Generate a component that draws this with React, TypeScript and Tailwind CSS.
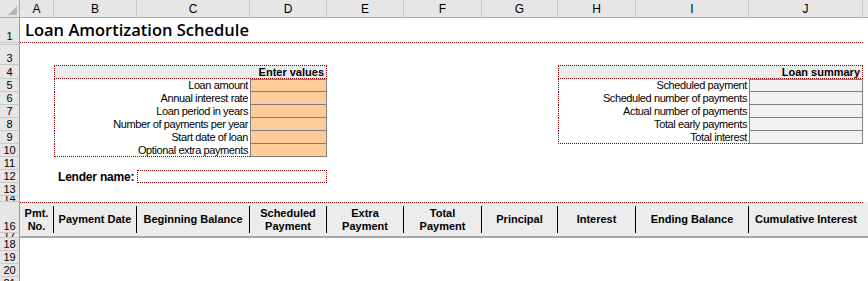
import React from 'react';

const font = { fontFamily: '"Liberation Sans", Arial, sans-serif' };

const colLetters = ['A', 'B', 'C', 'D', 'E', 'F', 'G', 'H', 'I', 'J'];

// grid row index -> label shown in the row header
const rowLabels: { row: number; label: string; clip?: boolean }[] = [
  { row: 2, label: '1' },
  { row: 3, label: '', clip: true },
  { row: 4, label: '3' },
  { row: 5, label: '4' },
  { row: 6, label: '5' },
  { row: 7, label: '6' },
  { row: 8, label: '7' },
  { row: 9, label: '8' },
  { row: 10, label: '9' },
  { row: 11, label: '10' },
  { row: 12, label: '11' },
  { row: 13, label: '12' },
  { row: 14, label: '13' },
  { row: 15, label: '14', clip: true },
  { row: 16, label: '16' },
  { row: 17, label: '17', clip: true },
  { row: 18, label: '18' },
  { row: 19, label: '19' },
  { row: 20, label: '20' },
  { row: 21, label: '21' },
];

const rowStart: Record<number, string> = {
  2: 'row-start-2', 3: 'row-start-3', 4: 'row-start-4', 5: 'row-start-5', 6: 'row-start-6',
  7: 'row-start-7', 8: 'row-start-8', 9: 'row-start-9', 10: 'row-start-10', 11: 'row-start-11',
  12: 'row-start-12', 13: 'row-start-13', 14: 'row-start-14', 15: 'row-start-15', 16: 'row-start-16',
  17: 'row-start-17', 18: 'row-start-18', 19: 'row-start-19', 20: 'row-start-20', 21: 'row-start-21',
};

const colStart: Record<number, string> = {
  2: 'col-start-2', 3: 'col-start-3', 4: 'col-start-4', 5: 'col-start-5', 6: 'col-start-6',
  7: 'col-start-7', 8: 'col-start-8', 9: 'col-start-9', 10: 'col-start-10', 11: 'col-start-11',
};

const inputs = [
  'Loan amount',
  'Annual interest rate',
  'Loan period in years',
  'Number of payments per year',
  'Start date of loan',
  'Optional extra payments',
];

const summary = [
  'Scheduled payment',
  'Scheduled number of payments',
  'Actual number of payments',
  'Total early payments',
  'Total interest',
];

const headers: string[][] = [
  ['Pmt.', 'No.'],
  ['Payment Date'],
  ['Beginning Balance'],
  ['Scheduled', 'Payment'],
  ['Extra', 'Payment'],
  ['Total', 'Payment'],
  ['Principal'],
  ['Interest'],
  ['Ending Balance'],
  ['Cumulative Interest'],
];

export default function App() {
  return (
    <div className="h-[281px] w-[868px] overflow-hidden bg-white text-black" style={font}>
      <div className="grid grid-cols-[20px_34px_83px_113px_77px_77px_78px_76px_78px_113px_114px_1fr] grid-rows-[18px_25px_2px_20px_14px_13px_13px_13px_13px_13px_13px_13px_13px_13px_6px_31px_5px_13px_13px_13px_13px]">
        {/* corner */}
        <div className="col-start-1 row-start-1 bg-[#e6e6e6] border-r border-b border-[#ababab] flex items-end justify-end p-[2px]">
          <svg width="9" height="9" viewBox="0 0 9 9">
            <polygon points="9,0 9,9 0,9" fill="#b7b7b7" />
          </svg>
        </div>

        {/* column headers */}
        {colLetters.map((c, i) => (
          <div
            key={c}
            className={`${colStart[i + 2]} row-start-1 bg-[#e6e6e6] border-r border-r-[#c6c6c6] border-b border-b-[#ababab] flex items-center justify-center text-[12px] leading-none`}
          >
            {c}
          </div>
        ))}
        <div className="col-start-12 row-start-1 bg-[#e6e6e6] border-b border-[#ababab]" />

        {/* row headers */}
        {rowLabels.map((r) => (
          <div
            key={r.row}
            className={`col-start-1 ${rowStart[r.row]} bg-[#e6e6e6] border-r border-r-[#9b9b9b] border-b border-b-[#c9c9c9] flex justify-center overflow-hidden text-[11px] ${r.clip ? 'items-start leading-[4px]' : 'items-end leading-[12px]'}`}
          >
            {r.label}
          </div>
        ))}

        {/* title row */}
        <div className="col-start-2 col-span-10 row-start-2 border-b border-dotted border-[#800000] flex items-center pl-[5px]">
          <span className="text-[16.5px] font-semibold leading-none" style={{ fontFamily: '"Open Sans", sans-serif' }}>
            Loan Amortization Schedule
          </span>
        </div>

        {/* Enter values box */}
        <div className="col-start-3 col-span-3 row-start-5 bg-[#ececec] border border-dotted border-[#800000] flex items-center justify-end pr-[2px] text-[11px] font-bold">
          Enter values
        </div>
        {inputs.map((label, i) => (
          <React.Fragment key={label}>
            <div
              className={`col-start-3 col-span-2 ${rowStart[6 + i]} border-l border-dotted border-[#800000] ${i === inputs.length - 1 ? 'border-b' : ''} flex items-center justify-end pr-[2px] text-[11px] leading-none tracking-[-0.4px]`}
            >
              {label}
            </div>
            <div
              className={`col-start-5 ${rowStart[6 + i]} bg-[#ffcc99] border-x border-b border-[#808080] ${i === 0 ? 'border-t' : ''}`}
            />
          </React.Fragment>
        ))}

        {/* Loan summary box */}
        <div className="col-start-9 col-span-3 row-start-5 bg-[#ececec] border border-dotted border-[#800000] flex items-center justify-end pr-[2px] text-[11px] font-bold">
          Loan summary
        </div>
        {summary.map((label, i) => (
          <React.Fragment key={label}>
            <div
              className={`col-start-9 col-span-2 ${rowStart[6 + i]} border-l border-dotted border-[#800000] ${i === summary.length - 1 ? 'border-b' : ''} flex items-center justify-end pr-[2px] text-[11px] leading-none tracking-[-0.4px]`}
            >
              {label}
            </div>
            <div
              className={`col-start-11 ${rowStart[6 + i]} bg-[#f2f2f2] border-x border-b border-[#808080] ${i === 0 ? 'border-t' : ''}`}
            />
          </React.Fragment>
        ))}

        {/* Lender name */}
        <div className="col-start-3 row-start-13 flex items-center pl-[4px] text-[12px] font-bold leading-none tracking-[-0.2px]">
          Lender name:
        </div>
        <div className="col-start-4 col-span-2 row-start-13 border border-dotted border-[#800000]" />

        {/* schedule header band */}
        <div className="col-start-2 col-span-11 row-start-16 row-span-2 bg-[#ececec] border-b-2 border-[#a6a6a6]" />
        <div className="col-start-2 col-span-10 row-start-16 border-t border-dotted border-[#800000]" />
        {headers.map((lines, i) => (
          <div key={i} className={`${colStart[i + 2]} row-start-16 pt-[4px]`}>
            <div
              className={`h-full flex flex-col items-center justify-center text-center text-[11px] font-bold leading-[13px] ${i < headers.length - 1 ? 'border-r border-black' : ''}`}
            >
              {lines.map((l) => (
                <span key={l} className="whitespace-nowrap">
                  {l}
                </span>
              ))}
            </div>
          </div>
        ))}
      </div>
    </div>
  );
}
